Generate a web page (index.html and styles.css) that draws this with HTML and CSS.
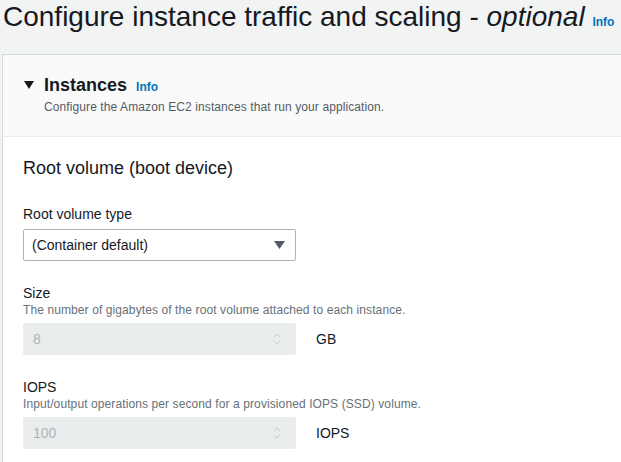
FILE: index.html
```html
<!DOCTYPE html>
<html lang="en">
<head>
<meta charset="utf-8">
<title>Configure instance traffic and scaling</title>
<link rel="stylesheet" href="styles.css">
</head>
<body>
<h1 class="page-title">Configure instance traffic and scaling - <em>optional</em> <a class="info info-title" href="#">Info</a></h1>
<section class="panel">
  <header class="panel-header">
    <div class="panel-heading">
      <svg class="caret" width="10" height="8" viewBox="0 0 10 8"><polygon points="0,0 10,0 5,8" fill="#16191f"/></svg>
      <h2 class="panel-title">Instances</h2>
      <a class="info" href="#">Info</a>
    </div>
    <p class="panel-desc">Configure the Amazon EC2 instances that run your application.</p>
  </header>
  <div class="panel-body">
    <h3 class="group-title">Root volume (boot device)</h3>
    <div class="field field-first">
      <label class="field-label">Root volume type</label>
      <div class="select">
        <span>(Container default)</span>
        <svg class="select-arrow" width="11" height="8" viewBox="0 0 11 8"><polygon points="0,0 11,0 5.5,8" fill="#545b64"/></svg>
      </div>
    </div>
    <div class="field">
      <label class="field-label">Size</label>
      <p class="field-desc">The number of gigabytes of the root volume attached to each instance.</p>
      <div class="input-row">
        <div class="input disabled">
          <span>8</span>
          <svg class="spinner" width="8" height="12" viewBox="0 0 8 12"><polyline points="1,4 4,1 7,4" fill="none" stroke="#c6cccc" stroke-width="1"/><polyline points="1,8 4,11 7,8" fill="none" stroke="#c6cccc" stroke-width="1"/></svg>
        </div>
        <span class="unit">GB</span>
      </div>
    </div>
    <div class="field">
      <label class="field-label">IOPS</label>
      <p class="field-desc">Input/output operations per second for a provisioned IOPS (SSD) volume.</p>
      <div class="input-row">
        <div class="input disabled">
          <span>100</span>
          <svg class="spinner" width="8" height="12" viewBox="0 0 8 12"><polyline points="1,4 4,1 7,4" fill="none" stroke="#c6cccc" stroke-width="1"/><polyline points="1,8 4,11 7,8" fill="none" stroke="#c6cccc" stroke-width="1"/></svg>
        </div>
        <span class="unit">IOPS</span>
      </div>
    </div>
  </div>
</section>
</body>
</html>
```
FILE: styles.css
```css
html, body {
  margin: 0;
  padding: 0;
  background: #f2f3f3;
  font-family: "Liberation Sans", Arial, sans-serif;
  color: #16191f;
  overflow: hidden;
}
.page-title {
  margin: 0 0 20px 0;
  padding-left: 3px;
  height: 34px;
  font-size: 28px;
  line-height: 34px;
  font-weight: 400;
  white-space: nowrap;
}
.page-title em {
  font-style: italic;
}
.info {
  color: #0073bb;
  font-weight: 700;
  font-size: 12px;
  line-height: 1;
  text-decoration: none;
}
.panel {
  margin-left: 2px;
  border-left: 1px solid #d5dbdb;
  border-top: 1px solid #d5dbdb;
  background: #ffffff;
}
.panel-header {
  background: #fafafa;
  border-bottom: 1px solid #eaeded;
  padding: 19px 20px 21px 21px;
}
.panel-heading {
  display: flex;
  align-items: center;
  height: 22px;
}
.caret {
  margin-right: 10px;
}
.panel-title {
  margin: 0 9px 0 0;
  font-size: 18px;
  line-height: 22px;
  font-weight: 700;
}
.panel-heading .info {
  margin-top: 3px;
}
.panel-desc {
  margin: 3px 0 0 20px;
  font-size: 12px;
  line-height: 16px;
  letter-spacing: 0.1px;
  color: #545b64;
}
.panel-body {
  padding: 20px 20px 20px 20px;
}
.group-title {
  margin: 0;
  font-size: 18px;
  line-height: 22px;
  font-weight: 400;
}
.field {
  margin-top: 24px;
}
.field-first {
  margin-top: 27px;
}
.field-label {
  display: block;
  font-size: 14px;
  line-height: 16px;
}
.field-desc {
  margin: 1px 0 5px 0;
  font-size: 12px;
  line-height: 16px;
  letter-spacing: 0.1px;
  color: #687078;
}
.select {
  box-sizing: border-box;
  margin-top: 7px;
  width: 273px;
  height: 32px;
  border: 1px solid #aab7b8;
  border-radius: 2px;
  background: #fff;
  display: flex;
  align-items: center;
  justify-content: space-between;
  padding: 0 10px 0 8px;
  font-size: 14px;
}
.input-row {
  display: flex;
  align-items: center;
  gap: 20px;
}
.input {
  box-sizing: border-box;
  width: 273px;
  height: 32px;
  border-radius: 2px;
  display: flex;
  align-items: center;
  justify-content: space-between;
  padding: 0 14px 0 9px;
  font-size: 14px;
}
.input.disabled {
  background: #eaeded;
  border: 1px solid #eaeded;
  color: #aab7b8;
}
.unit {
  font-size: 14px;
}
```
